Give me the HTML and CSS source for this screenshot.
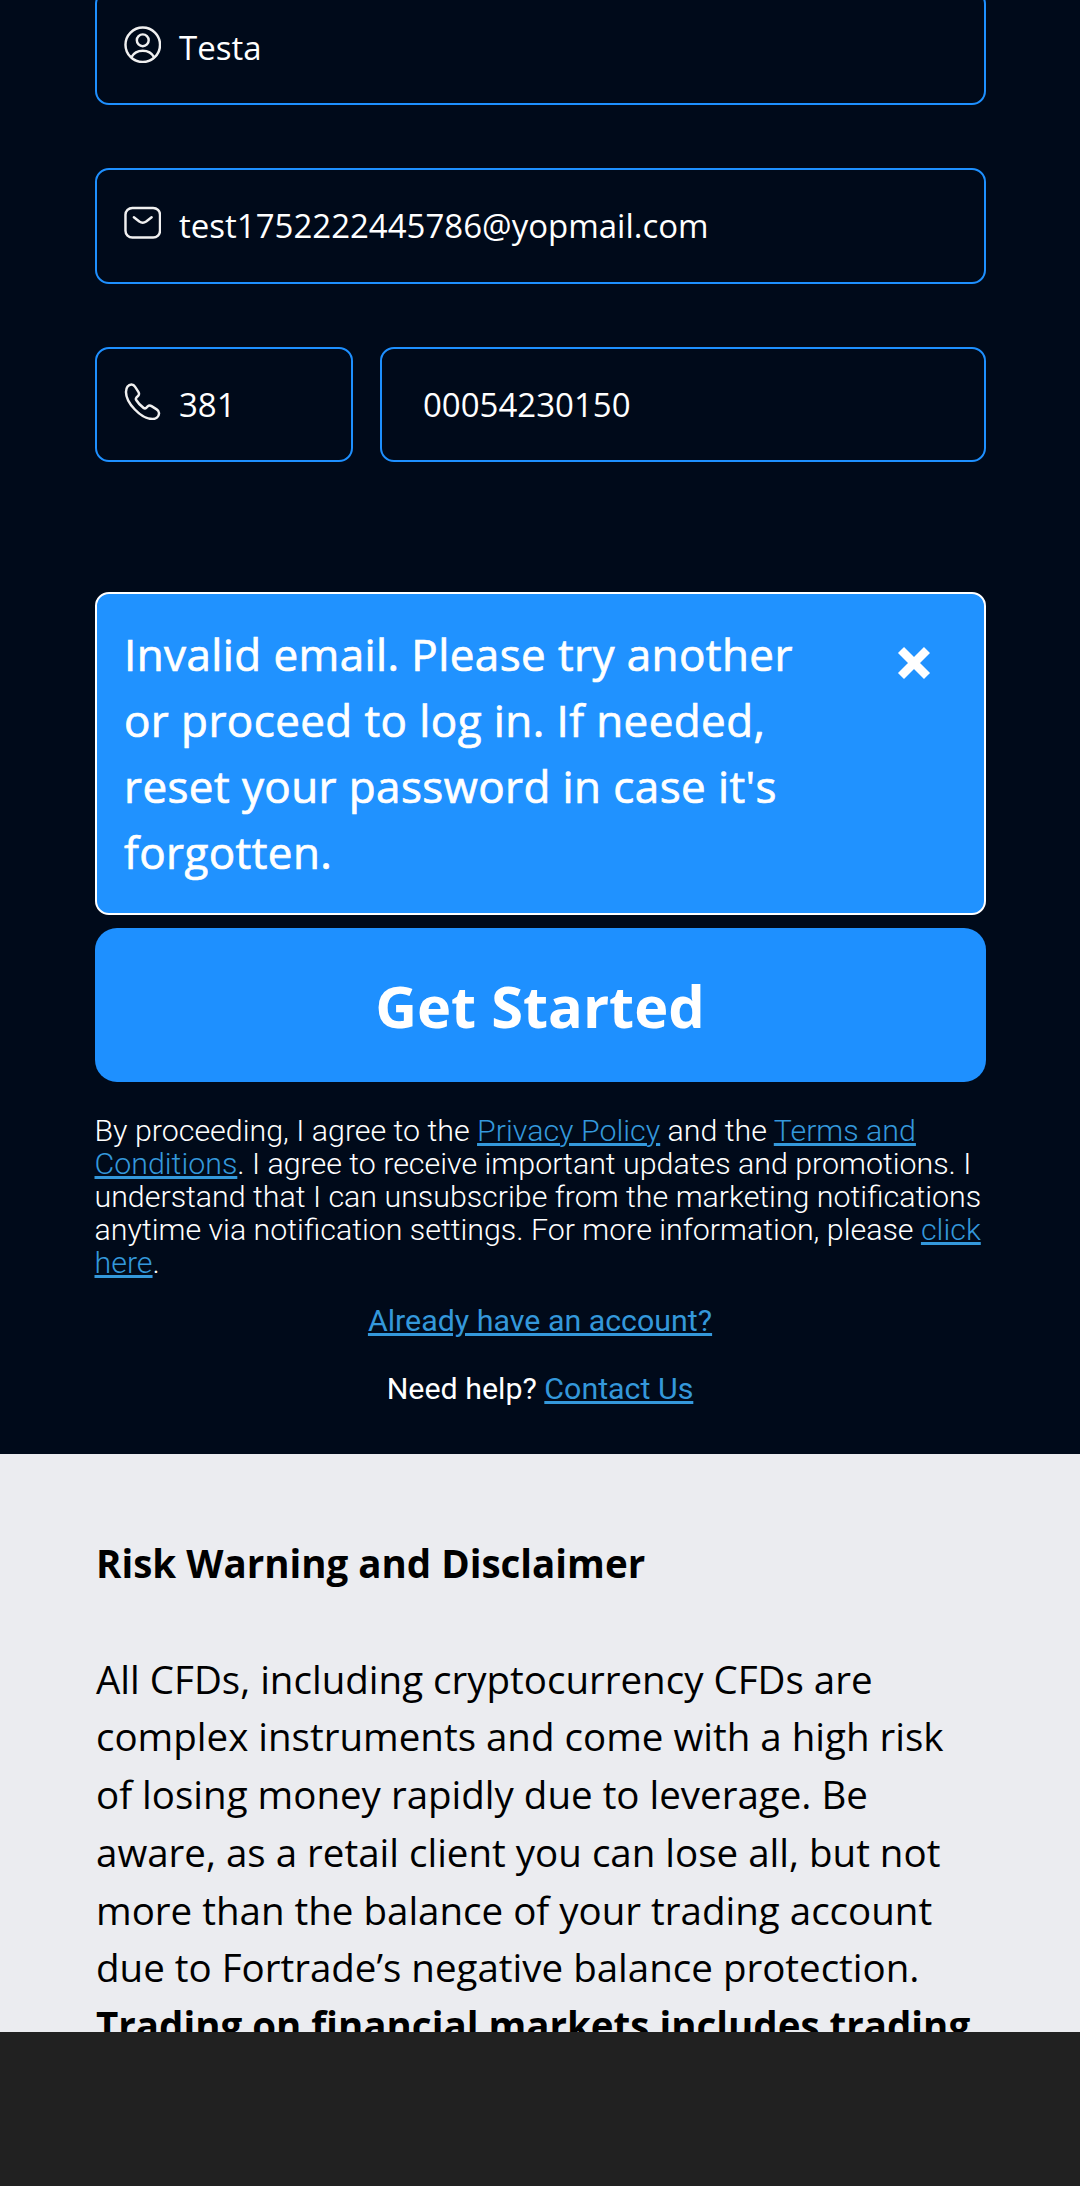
FILE: index.html
```html
<!DOCTYPE html>
<html lang="en">
<head>
<meta charset="utf-8">
<title>Get Started</title>
<link rel="stylesheet" href="styles.css">
</head>
<body>
<main class="signup">
  <form class="form">
    <div class="field">
      <svg class="icon" viewBox="0 0 38 38"><circle cx="19" cy="19" r="17.5"/><circle cx="19" cy="14.5" r="6"/><path d="M7.5 31.5C10 27 14 25 19 25s9 2 11.500 6.500"/></svg>
      <span class="value">Testa</span>
    </div>
    <div class="field">
      <svg class="icon" viewBox="0 0 38 38"><rect x="1.500" y="4" width="35" height="30" rx="7"/><path d="M10 13.500l5.500 4.300q3.500 2.400 7 0L28 13.500"/></svg>
      <span class="value">test1752222445786@yopmail.com</span>
    </div>
    <div class="phone">
      <div class="field field-code">
        <svg class="icon" viewBox="0 0 38 38"><path d="M2 9C2 4.500 4.500 1.500 7.500 1.500c1.800 0 2.800.8 3.800 2.500l3.400 5.200c.9 1.500.7 2.600-.4 3.900l-1.800 1.800c-.8 1-.6 1.700 0 2.600 1.800 2.900 4.300 5.600 7.300 7.700 1 .7 1.900.7 2.700-.1l1.500-1.500c1.200-1.100 2.500-1.100 3.900-.2l5.200 3.300c1.800 1.100 2.500 2.300 2.400 4.100-.2 3-2.800 5.700-6.500 5.700C17 36.500 2 20 2 9z"/></svg>
        <span class="value">381</span>
      </div>
      <div class="field field-number"><span class="value">00054230150</span></div>
    </div>
    <div class="alert">
      <p class="alert-text">Invalid email. Please try another or proceed to log in. If needed, reset your password in case it's forgotten.</p>
      <svg class="close" viewBox="0 0 34 34"><path d="M4 4l26 26M30 4L4 30"/></svg>
    </div>
    <button class="submit" type="button">Get Started</button>
  </form>
  <p class="terms">By proceeding, I agree to the <a href="#">Privacy Policy</a> and the <a href="#">Terms and Conditions</a>. I agree to receive important updates and promotions. I understand that I can unsubscribe from the marketing notifications anytime via notification settings. For more information, please <a href="#">click here</a>.</p>
  <p class="login"><a href="#">Already have an account?</a></p>
  <p class="help">Need help? <a href="#">Contact Us</a></p>
</main>
<section class="risk">
  <h2 class="risk-title">Risk Warning and Disclaimer</h2>
  <p class="risk-text">All CFDs, including cryptocurrency CFDs are complex instruments and come with a high risk of losing money rapidly due to leverage. Be aware, as a retail client you can lose all, but not more than the balance of your trading account due to Fortrade’s negative balance protection. <strong>Trading on financial markets includes trading</strong></p>
</section>
<footer class="bar"></footer>
</body>
</html>
```
FILE: styles.css
```css
* { box-sizing: border-box; }
html, body { margin: 0; height: 2186px; overflow: hidden; }
body { display: flex; flex-direction: column; background: #000a1a; font-family: "Open Sans", "Liberation Sans", sans-serif; }
h2, p { margin: 0; }

.signup { height: 1454px; flex: none; padding: 0 94.5px; color: #fff; background: #000a1a; }
.form { display: flex; flex-direction: column; margin-top: -10.5px; }
.field { display: flex; align-items: center; height: 115.5px; border: 2px solid #1e90ff; border-radius: 14px; padding: 0 27px; gap: 18px; margin-bottom: 63.25px; }
.icon { width: 37.5px; height: 37.5px; flex: none; margin-bottom: 6px; fill: none; stroke: #f0f0f0; stroke-width: 2.5; stroke-linecap: round; stroke-linejoin: round; }
.value { margin-bottom: -0.6px; font-size: 33px; line-height: 46px; }
.phone { display: flex; gap: 27px; }
.phone .field { height: 115px; margin-bottom: 130px; }
.field-code { width: 258px; }
.field-number { flex: 1; padding-left: 41.5px; }

.alert { display: flex; justify-content: space-between; height: 323px; padding: 27px 52.5px 0 27.5px; border: 2px solid #fff; border-radius: 14px; background: #2092ff; }
.alert-text { width: 690px; font-size: 44px; font-weight: 500; line-height: 66px; letter-spacing: 0.4px; -webkit-text-stroke: 0.7px #fff; }
.close { width: 34px; height: 34px; margin-top: 24.5px; fill: none; stroke: #fff; stroke-width: 8.5; }
.submit { height: 154px; margin: 13px 0 0; padding: 2px 0 0; border: 0; border-radius: 22px; background: #1e90ff; color: #fff; font: 700 57.75px/78px "Open Sans", "Liberation Sans", sans-serif; }

.terms, .login, .help { font-family: Roboto, "Liberation Sans", sans-serif; font-size: 30.36px; line-height: 33px; }
.terms { margin-top: 32px; font-weight: 300; }
.login, .help { text-align: center; }
.login { margin-top: 25px; }
.help { margin-top: 35px; }
a { color: #3498db; text-decoration: underline; text-decoration-thickness: 3px; text-underline-offset: 2px; }

.risk { flex: none; height: 578px; padding: 81px 96px 0; background: #ebecf0; color: #000; overflow: hidden; font-size: 38.5px; line-height: 57.75px; }
.risk-title { font-size: inherit; font-weight: 700; margin-bottom: 57.75px; }
.bar { flex: 1; background: #212121; }
```
